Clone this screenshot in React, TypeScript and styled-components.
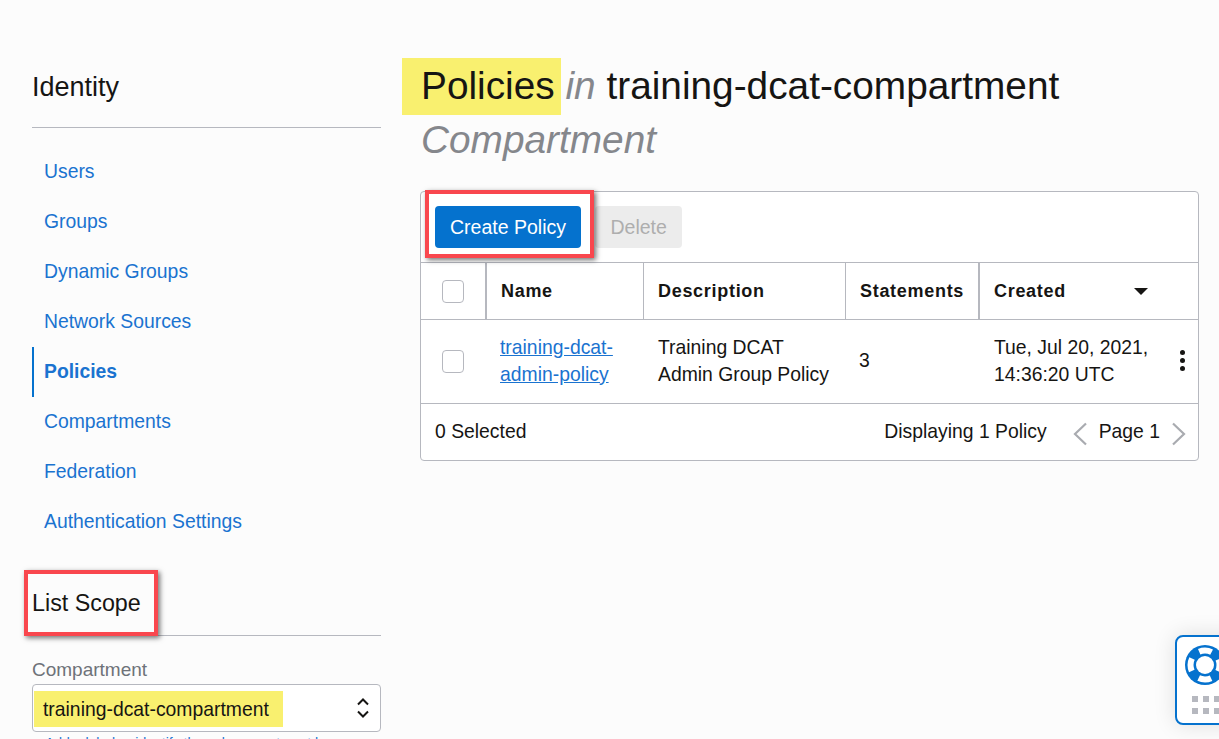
import React from 'react';
import styled, { createGlobalStyle } from 'styled-components';

const GlobalStyle = createGlobalStyle`
  html, body {
    margin: 0;
    height: 739px;
    overflow: hidden;
    background: #fcfcfc;
    font-family: "Liberation Sans", Arial, sans-serif;
    color: #161513;
  }
`;

const Page = styled.div`
  display: flex;
  height: 739px;
  padding: 56px 20px 0 32px;
  box-sizing: border-box;
  overflow: hidden;
`;

const Sidebar = styled.aside`
  width: 349px;
  flex: none;
  margin-right: 39px;
`;

const SideHeading = styled.h2`
  margin: 0;
  font-size: 27px;
  font-weight: 400;
  line-height: 62px;
  height: 71px;
  border-bottom: 1px solid #b6b8bf;
`;

const ScopeHeading = styled(SideHeading)`
  font-size: 23.3px;
  height: 63px;
`;

const SideNav = styled.nav`
  display: flex;
  flex-direction: column;
  margin: 19px 0 25px;
`;

const NavItem = styled.a<{ $active?: boolean }>`
  display: block;
  height: 50px;
  line-height: 48px;
  padding-left: ${p => (p.$active ? '10px' : '12px')};
  font-size: 19.35px;
  font-weight: ${p => (p.$active ? 700 : 400)};
  color: #1a73d0;
  border-left: ${p => (p.$active ? '2px solid #0572ce' : 'none')};
`;

const Annotated = styled.div`
  position: relative;
`;

const RedBox = styled.div<{ $top: number; $right: number; $bottom: number; $left: number }>`
  position: absolute;
  top: ${p => p.$top}px;
  right: ${p => p.$right}px;
  bottom: ${p => p.$bottom}px;
  left: ${p => p.$left}px;
  border: 4px solid #f9474e;
  box-shadow: 2px 2px 5px rgba(0, 0, 0, 0.55);
  pointer-events: none;
`;

const FieldLabel = styled.div`
  margin-top: 20px;
  font-size: 19px;
  line-height: 28px;
  color: #6e7279;
`;

const SelectBox = styled.div`
  display: flex;
  align-items: center;
  justify-content: space-between;
  height: 48px;
  padding: 0 9px 0 1px;
  box-sizing: border-box;
  border: 1px solid #b6b8bf;
  border-radius: 4px;
  background: #fff;
`;

const SelectValue = styled.span`
  display: block;
  margin-top: 2px;
  padding: 0 14px 0 9px;
  height: 36px;
  line-height: 37px;
  font-size: 19.35px;
  background: #f9f06f;
`;

const HintText = styled.div`
  margin-top: 3px;
  padding-left: 13px;
  font-size: 14px;
  line-height: 16px;
  color: #1a73d0;
  white-space: nowrap;
`;

const Main = styled.main`
  flex: 1;
  min-width: 0;
`;

const Title = styled.h1`
  margin: 0 0 24px;
  padding: 2px 0 0 1px;
  font-size: 38.8px;
  font-weight: 400;
  line-height: 54px;
`;

const TitleMark = styled.span`
  display: inline-block;
  height: 56px;
  margin: 0 -6px -3px -19px;
  padding: 1px 6px 0 19px;
  background: #f9f06f;
`;

const TitleMuted = styled.em`
  color: #85878c;
  font-style: italic;
`;

const Panel = styled.section`
  border: 1px solid #b6b8bf;
  border-radius: 4px;
  background: #fff;
`;

const Toolbar = styled.div`
  display: flex;
  align-items: center;
  gap: 14px;
  height: 70px;
  padding: 0 14px;
  border-bottom: 1px solid #b6b8bf;
`;

const Button = styled.button<{ $primary?: boolean }>`
  display: block;
  height: 42px;
  padding: 0 ${p => (p.$primary ? '15px' : '15.5px')};
  border: none;
  border-radius: 4px;
  font-family: inherit;
  font-size: 19.5px;
  background: ${p => (p.$primary ? '#0572ce' : '#ececec')};
  color: ${p => (p.$primary ? '#fff' : '#aeaeae')};
`;

const TableRow = styled.div<{ $height: number }>`
  display: grid;
  grid-template-columns: 66px 157px 202px 134px 1fr;
  height: ${p => p.$height}px;
  border-bottom: 1px solid #b6b8bf;
`;

const HeadCell = styled.div<{ $thick?: boolean; $plain?: boolean }>`
  display: flex;
  align-items: center;
  justify-content: ${p => (p.$plain ? 'center' : 'flex-start')};
  padding: 0 ${p => (p.$plain ? '0' : '14px')};
  font-size: 18px;
  font-weight: 700;
  letter-spacing: 0.7px;
  white-space: nowrap;
  border-right: ${p => (p.$thick ? '2px' : '1px')} solid #b6b8bf;
`;

const LastHead = styled.div`
  display: flex;
  align-items: center;
  justify-content: space-between;
  padding: 0 50px 0 14px;
  font-size: 18px;
  font-weight: 700;
  letter-spacing: 0.7px;
`;

const SortArrow = styled.span`
  width: 0;
  height: 0;
  border-left: 7px solid transparent;
  border-right: 7px solid transparent;
  border-top: 7px solid #161513;
`;

const Cell = styled.div`
  display: flex;
  align-items: center;
  padding: 0 13px 2px;
  font-size: 19.35px;
  line-height: 27px;
`;

const CheckCell = styled(Cell)`
  padding: 0 0 0 21px;
`;

const TextCell = styled(Cell)`
  padding: 0 0 2px 14px;
  white-space: nowrap;
`;

const ActionCell = styled(Cell)`
  justify-content: space-between;
  padding: 0 13px 2px 14px;
`;

const PolicyLink = styled.a`
  color: #1a73d0;
  text-decoration: underline;
`;

const Checkbox = styled.span`
  display: block;
  width: 22px;
  height: 23px;
  box-sizing: border-box;
  background: #fff;
  border: 1px solid #b6b8bf;
  border-radius: 4px;
`;

const Kebab = styled.span`
  display: flex;
  flex-direction: column;
  gap: 3px;
  i {
    width: 5px;
    height: 5px;
    border-radius: 50%;
    background: #161513;
  }
`;

const Footer = styled.div`
  display: flex;
  align-items: center;
  justify-content: space-between;
  height: 56px;
  box-sizing: border-box;
  padding: 0 12px 2px 14px;
  font-size: 19.35px;
`;

const Pager = styled.div`
  display: flex;
  align-items: center;
`;

const PageLabel = styled.span`
  margin: 0 12px;
`;

const DisplayLabel = styled.span`
  margin-right: 26px;
`;

const PagerArrow = styled.svg`
  margin-top: 5px;
`;

const HelpWidget = styled.div`
  position: fixed;
  left: 1175px;
  top: 635px;
  width: 80px;
  height: 90px;
  box-sizing: border-box;
  background: #fff;
  border: 2px solid #0572ce;
  border-radius: 8px;
  box-shadow: 0 0 22px rgba(0, 0, 0, 0.12);
  padding: 8px 0 0 8px;
`;

const HelpDots = styled.div`
  display: grid;
  grid-template-columns: repeat(3, 6px);
  gap: 6px 5px;
  margin: 11px 0 0 7px;
  i {
    width: 6px;
    height: 6px;
    background: #b6b8bf;
  }
`;

function Chevron({ dir }: { dir: 'left' | 'right' }) {
  return (
    <PagerArrow width="14" height="24" viewBox="0 0 14 24" fill="none" stroke="#a9abb0" strokeWidth="2.2">
      <path d={dir === 'left' ? 'M13 1.5 2 12l11 10.5' : 'M1 1.5 12 12 1 22.5'} />
    </PagerArrow>
  );
}

function UpDownIcon() {
  return (
    <svg width="16" height="24" viewBox="0 0 16 24" fill="none" stroke="#161513" strokeWidth="2">
      <path d="M3 8.5 8 3.5l5 5M3 15.5l5 5 5-5" />
    </svg>
  );
}

function Lifebuoy() {
  return (
    <svg width="40" height="40" viewBox="0 0 40 40" display="block">
      <circle cx="20" cy="20" r="20" fill="#0572ce" />
      <circle cx="20" cy="20" r="14.5" fill="none" stroke="#fff" strokeWidth="6" strokeDasharray="12.8 9.98" strokeDashoffset="6.4" />
      <circle cx="20" cy="20" r="9" fill="#fff" />
    </svg>
  );
}

const NAV = ['Users', 'Groups', 'Dynamic Groups', 'Network Sources', 'Policies', 'Compartments', 'Federation', 'Authentication Settings'];

export default function App() {
  return (
    <>
      <GlobalStyle />
      <Page>
        <Sidebar>
          <SideHeading>Identity</SideHeading>
          <SideNav>
            {NAV.map(item => (
              <NavItem key={item} $active={item === 'Policies'}>{item}</NavItem>
            ))}
          </SideNav>
          <Annotated>
            <ScopeHeading>List Scope</ScopeHeading>
            <RedBox $top={-2} $right={223} $bottom={0} $left={-8} />
          </Annotated>
          <FieldLabel>Compartment</FieldLabel>
          <SelectBox>
            <SelectValue>training-dcat-compartment</SelectValue>
            <UpDownIcon />
          </SelectBox>
          <HintText>Add a label or identify the subcompartment here</HintText>
        </Sidebar>
        <Main>
          <Title>
            <TitleMark>Policies</TitleMark> <TitleMuted>in</TitleMuted> training-dcat-compartment <TitleMuted>Compartment</TitleMuted>
          </Title>
          <Panel>
            <Toolbar>
              <Annotated>
                <Button $primary>Create Policy</Button>
                <RedBox $top={-16} $right={-13} $bottom={-10} $left={-10} />
              </Annotated>
              <Button>Delete</Button>
            </Toolbar>
            <TableRow $height={56}>
              <HeadCell $plain $thick><Checkbox /></HeadCell>
              <HeadCell>Name</HeadCell>
              <HeadCell>Description</HeadCell>
              <HeadCell $thick>Statements</HeadCell>
              <LastHead>Created<SortArrow /></LastHead>
            </TableRow>
            <TableRow $height={83}>
              <CheckCell><Checkbox /></CheckCell>
              <Cell><PolicyLink>training-dcat-admin-policy</PolicyLink></Cell>
              <TextCell>Training DCAT<br />Admin Group Policy</TextCell>
              <Cell>3</Cell>
              <ActionCell>
                <span>Tue, Jul 20, 2021,<br />14:36:20 UTC</span>
                <Kebab><i /><i /><i /></Kebab>
              </ActionCell>
            </TableRow>
            <Footer>
              <span>0 Selected</span>
              <Pager>
                <DisplayLabel>Displaying 1 Policy</DisplayLabel>
                <Chevron dir="left" />
                <PageLabel>Page 1</PageLabel>
                <Chevron dir="right" />
              </Pager>
            </Footer>
          </Panel>
        </Main>
      </Page>
      <HelpWidget>
        <Lifebuoy />
        <HelpDots><i /><i /><i /><i /><i /><i /></HelpDots>
      </HelpWidget>
    </>
  );
}
